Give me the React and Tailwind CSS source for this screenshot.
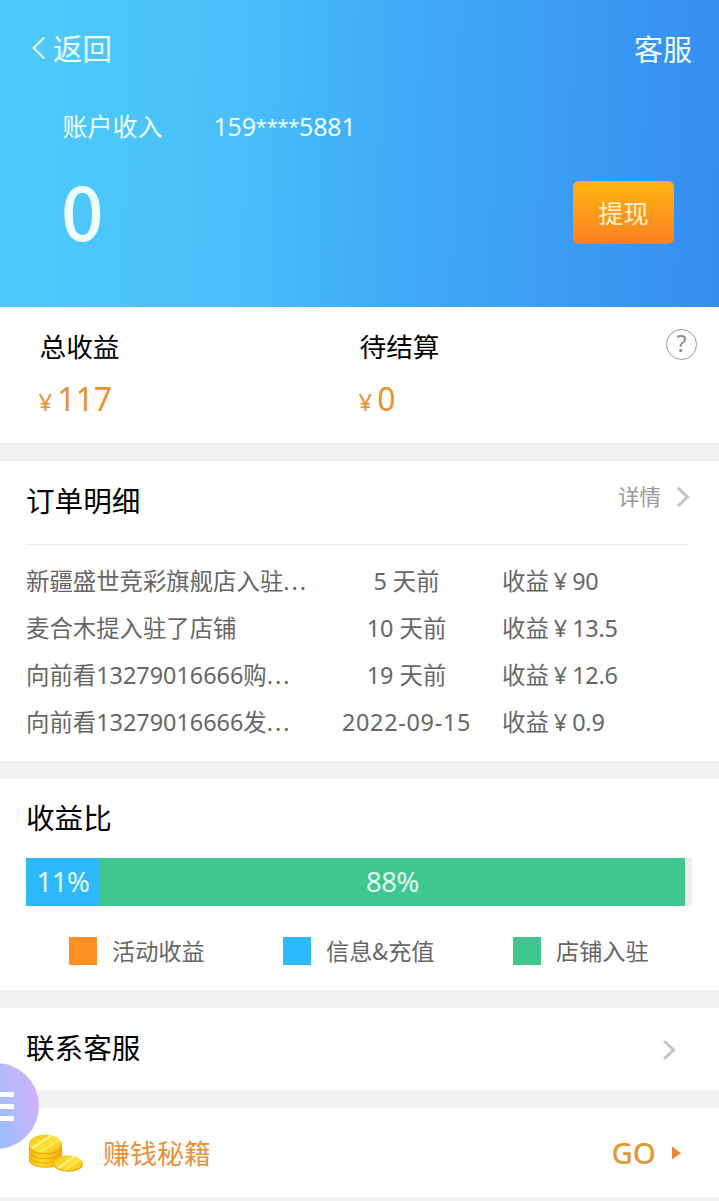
const orders = [
  { title: '新疆盛世竞彩旗舰店入驻', truncated: true, time: '5 天前', amount: '90' },
  { title: '麦合木提入驻了店铺', time: '10 天前', amount: '13.5' },
  { title: '向前看13279016666购', truncated: true, time: '19 天前', amount: '12.6' },
  { title: '向前看13279016666发', truncated: true, time: '2022-09-15', amount: '0.9', timeClass: 'tracking-[0.7px]' },
];

function Chevron({ className }) {
  return (
    <svg className={className} width="14" height="22" viewBox="0 0 14 22" fill="none" stroke="#c4c4c4" strokeWidth="3">
      <path d="M2 2 L11.5 11 L2 20" />
    </svg>
  );
}

function Header() {
  return (
    <header className="flex h-[307px] flex-col bg-[linear-gradient(92deg,#4ecafa_4%,#4abffa_33%,#40adf8_53%,#3c9df4_77%,#358df0_100%)] pt-[23px] text-[#effeff]">
      <div className="flex h-[50px] items-center justify-between pr-[27px] pl-[31px]">
        <div className="flex items-center">
          <svg className="-mt-px" width="15" height="24" viewBox="0 0 15 24" fill="none" stroke="currentColor" strokeWidth="2">
            <path d="M13.5 1.5 L2.5 12 L13.5 22.5" />
          </svg>
          <span className="ml-[7px] text-[29.5px]">返回</span>
        </div>
        <span className="text-[29px]">客服</span>
      </div>
      <div className="mt-8 flex h-10 items-center pl-[62.5px] text-[25px]">
        <span className="w-[151px]">账户收入</span>
        <span className="pt-0.5 font-['Noto_Sans',sans-serif] tracking-[-0.2px]">
          159<span className="align-[2px] text-[20px] leading-none tracking-[-0.2px]">****</span>5881
        </span>
      </div>
      <div className="mt-[23px] flex items-center justify-between pr-[45px] pl-[61px]">
        <span className="h-[88px] text-[75px] leading-[82px] font-medium">0</span>
        <button className="flex h-[63px] w-[101px] items-center justify-center rounded-md bg-linear-to-b from-[#fcb50b] to-[#ff7e22] pt-px text-[25px] text-[#fff3cf]">
          提现
        </button>
      </div>
    </header>
  );
}

function Stat({ label, value, className }) {
  return (
    <div className={className}>
      <div className="flex h-[42px] items-center text-[26.7px] text-black">{label}</div>
      <div className="mt-3 flex h-10 items-baseline font-['Noto_Sans',sans-serif] text-[#e6932f]">
        <span className="-ml-px text-[24px]">¥</span>
        <span className="ml-[5px] text-[32px] leading-10">{value}</span>
      </div>
    </div>
  );
}

function Legend({ color, label, className }) {
  return (
    <div className={`flex items-center ${className}`}>
      <span className={`size-7 ${color}`} />
      <span className="ml-[15px] text-[23.2px] text-[#666]">{label}</span>
    </div>
  );
}

function Coins() {
  return (
    <svg width="56" height="40" viewBox="0 0 56 40">
      <defs>
        <linearGradient id="side" x1="0" x2="1">
          <stop offset="0" stopColor="#efb40c" />
          <stop offset=".4" stopColor="#ffdc24" />
          <stop offset="1" stopColor="#f0a404" />
        </linearGradient>
        <linearGradient id="top" x1="0" y1="0" x2="1" y2="1">
          <stop offset="0" stopColor="#f0bf1e" />
          <stop offset=".5" stopColor="#ffe02e" />
          <stop offset="1" stopColor="#fcc40e" />
        </linearGradient>
        <clipPath id="topClip">
          <ellipse cx="17.5" cy="10.5" rx="16.2" ry="9" />
        </clipPath>
        <clipPath id="coinClip">
          <ellipse cx="40.5" cy="30" rx="14.2" ry="7.4" />
        </clipPath>
      </defs>
      <path d="M1 10 V27 C1 31 8 34.5 17.5 34.5 S34 31 34 27 V10Z" fill="url(#side)" />
      <g fill="none" stroke="#eca410" strokeWidth="1">
        <path d="M1 15 C2 18.500 9 21 17.500 21 S33 18.500 34 15" />
        <path d="M1 19.500 C2 23 9 25.500 17.500 25.500 S33 23 34 19.500" />
        <path d="M1 23.500 C2 27 9 29.800 17.500 29.800 S33 27 34 23.500" />
        <path d="M1 27.500 C2 31.500 9 34.200 17.500 34.200 S33 31.500 34 27.500" />
      </g>
      <ellipse cx="17.5" cy="10.5" rx="16.2" ry="9" fill="url(#top)" />
      <g clipPath="url(#topClip)" stroke="#fff08a" fill="none">
        <path d="M1 17 L26 1" strokeWidth="2.6" />
        <path d="M10 20 L36 4" strokeWidth="1.6" />
      </g>
      <ellipse cx="40.5" cy="31.2" rx="14.5" ry="7.6" fill="#eaa80a" />
      <ellipse cx="40.5" cy="30" rx="14.2" ry="7.4" fill="url(#top)" />
      <g clipPath="url(#coinClip)" stroke="#fff08a" fill="none">
        <path d="M28 37 L48 22" strokeWidth="2.2" />
        <path d="M35 39 L55 24" strokeWidth="1.4" />
      </g>
    </svg>
  );
}

export default function App() {
  return (
    <div className="relative flex h-[1201px] w-[719px] flex-col gap-[18px] overflow-hidden bg-[#f1f1f1] font-['Noto_Sans_CJK_SC',sans-serif] leading-none whitespace-nowrap">
      <div className="h-[443px] shrink-0 bg-white">
        <Header />
        <section className="flex items-start pt-[18px] pr-[22px] pl-[39.5px]">
          <Stat label="总收益" value="117" className="w-80" />
          <Stat label="待结算" value="0" className="flex-1" />
          <div className="mt-1 flex size-[31px] items-center justify-center rounded-full border border-[#999] pb-0.5 font-['Noto_Sans','Noto_Sans_CJK_SC',sans-serif] text-[23px] text-[#8f8f8f]">
            ?
          </div>
        </section>
      </div>

      <section className="h-[300px] shrink-0 bg-white px-[26px]">
        <div className="flex h-[83px] items-center justify-between">
          <h2 className="-mt-[5px] text-[28.6px] text-black">订单明细</h2>
          <div className="-mt-3.5 flex items-center gap-[15px] text-[21.5px] text-[#999]">
            详情
            <Chevron className="mt-0.5 mr-[3px]" />
          </div>
        </div>
        <div className="mr-1 h-px bg-[#ececec]" />
        <ul className="mt-[13px] font-['Noto_Sans','Noto_Sans_CJK_SC',sans-serif] text-[23.4px] text-[#666]">
          {orders.map((o) => (
            <li key={o.title} className="flex h-[47px] items-center">
              <span className="w-[300px]">
                {o.title}
                {o.truncated && <span className="tracking-[2px]">...</span>}
              </span>
              <span className={`w-[161px] text-center ${o.timeClass ?? ''}`}>{o.time}</span>
              <span className="ml-[15px]">
                收益<span className="inline-block w-[23.4px] text-center">¥</span>
                <span className="tracking-[-0.2px]">{o.amount}</span>
              </span>
            </li>
          ))}
        </ul>
      </section>

      <section className="h-[211px] shrink-0 bg-white px-[26px]">
        <h2 className="flex h-[77px] items-center text-[28.6px] text-black">收益比</h2>
        <div className="mt-0.5 flex h-12 w-[666px] bg-[#eee] font-['Noto_Sans',sans-serif] text-[27.5px] tracking-[-0.4px] text-[#e2fff8]">
          <div className="flex w-[74px] items-center justify-center bg-[#2db9fd] pb-px">11%</div>
          <div className="flex w-[585px] items-center justify-center bg-[#3fc78f] pb-px">88%</div>
        </div>
        <div className="mt-[31px] flex items-center pl-[43px]">
          <Legend color="bg-[#ff9024]" label="活动收益" className="w-[214px]" />
          <Legend color="bg-[#2db9fd]" label="信息&充值" className="w-[230px]" />
          <Legend color="bg-[#3fc78f]" label="店铺入驻" className="" />
        </div>
      </section>

      <section className="flex h-[82px] shrink-0 items-center justify-between bg-white pr-[43px] pl-[26px]">
        <h2 className="-mt-1 text-[28.6px] text-black">联系客服</h2>
        <Chevron className="mt-0.5" />
      </section>

      <section className="flex h-[89px] shrink-0 items-center bg-white pr-[37px] pl-7">
        <Coins />
        <span className="ml-[19px] text-[27px] text-[#e6913a]">赚钱秘籍</span>
        <span className="ml-auto font-['Noto_Sans',sans-serif] text-[29.5px] font-medium text-[#e09a35]">GO</span>
        <svg className="ml-[15px]" width="11" height="14" viewBox="0 0 11 14">
          <path d="M1 0.500 L10 7 L1 13.500Z" fill="#e6883a" />
        </svg>
      </section>

      <div className="absolute top-[1063px] -left-[47px] flex size-[86px] flex-col items-end justify-center gap-[7px] rounded-full bg-[linear-gradient(75deg,#9fbcfb_50%,#bdb8fc_72%,#ccb2fd_92%)] pr-[25px]">
        <span className="h-[5px] w-10 bg-white" />
        <span className="h-[5px] w-10 bg-white" />
        <span className="h-[5px] w-10 bg-white" />
      </div>
    </div>
  );
}
